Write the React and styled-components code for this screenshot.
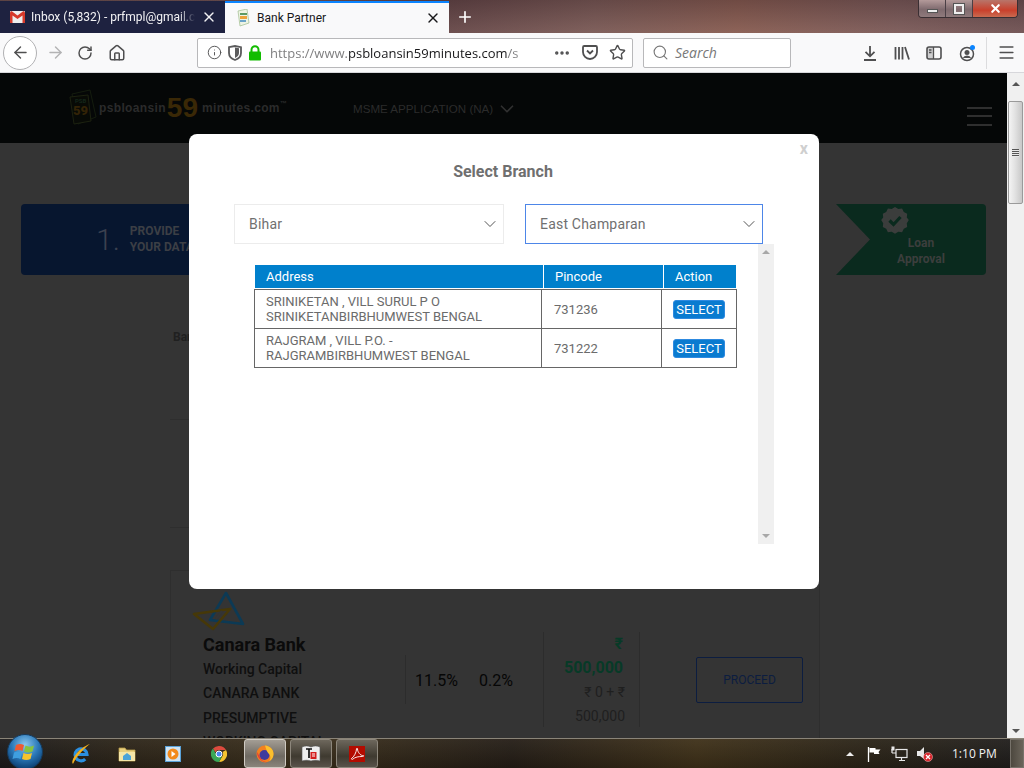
import React from 'react'
import styled, { createGlobalStyle } from 'styled-components'
import { ArrowLeft, ArrowRight, RotateCw, Home, Info, MoreHorizontal, Star, Search, X, Plus, Menu, ChevronDown } from 'lucide-react'

const GlobalStyle = createGlobalStyle`
  * { box-sizing: border-box; }
  html, body { margin: 0; padding: 0; background: #343434; }
`

const GmailIcon = () => (
  <svg width="15" height="12" viewBox="0 0 15 12">
    <rect width="15" height="12" rx="1" fill="#eee" />
    <path d="M0 1.5V12h2.5V4.5L7.5 8l5-3.5V12H15V1.5L13.5 0 7.5 4.5 1.5 0z" fill="#d6392b" />
  </svg>
)

const BankFavicon = () => (
  <svg width="16" height="18" viewBox="0 0 16 18">
    <path d="M3 2l9-2 2 14-9 3z" fill="#eef4e4" stroke="#9dbb8c" strokeWidth=".7" />
    <rect x="5" y="4" width="7" height="2" fill="#5d9a63" />
    <rect x="5" y="7" width="7" height="3" fill="#eda33b" />
    <rect x="5" y="11" width="6" height="2" fill="#6aa3c9" />
  </svg>
)

const ShieldIcon = () => (
  <svg width="14" height="16" viewBox="0 0 14 16">
    <path d="M1 2.2 7 1l6 1.2V8c0 3.4-2.6 5.8-6 7-3.4-1.200-6-3.600-6-7z" fill="none" stroke="#5b5b5c" strokeWidth="1.8" />
    <path d="M7 2.500 11 3.300V8c0 2.300-1.700 4-4 5z" fill="#5b5b5c" />
  </svg>
)

const LockIcon = () => (
  <svg width="14" height="16" viewBox="0 0 14 16">
    <path d="M3.500 7V4.800a3.500 3.500 0 0 1 7 0V7" fill="none" stroke="#12bc00" strokeWidth="2" />
    <rect x="1" y="6.500" width="12" height="9" rx="1" fill="#12bc00" />
  </svg>
)

const PocketIcon = () => (
  <svg width="16" height="15" viewBox="0 0 16 15">
    <path d="M1 2.200C1 1.500 1.500 1 2.200 1h11.600c.7 0 1.200.5 1.200 1.200V7a7 7 0 0 1-14 0z" fill="none" stroke="#4f4f50" strokeWidth="1.800" />
    <path d="M5 5.500 8 8.500l3-3" fill="none" stroke="#4f4f50" strokeWidth="1.800" />
  </svg>
)

const DownloadIcon = () => (
  <svg width="14" height="16" viewBox="0 0 14 16">
    <path d="M7 1v10M2.500 6.800 7 11.300l4.500-4.500M1 15h12" fill="none" stroke="#4f4f50" strokeWidth="1.800" />
  </svg>
)

const LibraryIcon = () => (
  <svg width="16" height="14" viewBox="0 0 16 14">
    <path d="M1.500 1v12.500M5 1v12.500M8.500 1v12.500M11 1l4 12.500" fill="none" stroke="#4f4f50" strokeWidth="1.800" />
  </svg>
)

const SidebarIcon = () => (
  <svg width="16" height="14" viewBox="0 0 16 14">
    <rect x="1" y="1" width="14" height="12" rx="2" fill="none" stroke="#4f4f50" strokeWidth="1.600" />
    <rect x="1" y="1" width="6.500" height="12" rx="1" fill="#4f4f50" opacity=".25" />
    <path d="M7.500 1v12M3 4h2.500M3 6.500h2.500" stroke="#4f4f50" strokeWidth="1.300" />
  </svg>
)

const AccountIcon = () => (
  <svg width="18" height="18" viewBox="0 0 18 18">
    <circle cx="8" cy="10" r="6.500" fill="none" stroke="#4f4f50" strokeWidth="1.500" />
    <circle cx="8" cy="8.500" r="2.500" fill="#4f4f50" />
    <path d="M3.800 14a4.500 4 0 0 1 8.400 0z" fill="#4f4f50" />
    <circle cx="13.500" cy="3.500" r="2.500" fill="#0a84ff" />
  </svg>
)

const MiniLogo = () => (
  <svg width="30" height="38" viewBox="0 0 30 38">
    <path d="M4 5 22 1l6 27-18 7z" fill="none" stroke="#141c0e" />
    <path d="M2 8l18-2 3 26-17 3z" fill="#080a06" stroke="#1c2110" />
    <text x="7" y="14" fontFamily="Roboto, sans-serif" fontSize="6" fontWeight="700" fill="#14261a">PSB</text>
    <text x="5" y="26" fontFamily="Roboto, sans-serif" fontSize="13" fontWeight="900" fill="#332306">59</text>
  </svg>
)

const BadgeCheck = () => (
  <svg width="28" height="28" viewBox="0 0 28 28">
    <path d="M14 1l3.300 2 3.800-.4 1.700 3.400 3.400 1.800-.4 3.800 2 2.400-2 3.300.4 3.800-3.400 1.700-1.700 3.400-3.800-.4-3.300 2-3.300-2-3.800.4-1.700-3.400-3.400-1.700.4-3.800-2-3.300 2-2.400-.4-3.800 3.400-1.800 1.700-3.400 3.800.4z" fill="#3b3d3c" />
    <path d="M8.500 14.500l4 4 7-7.500" fill="none" stroke="#0a2a1e" strokeWidth="3.200" />
  </svg>
)

const CanaraLogo = () => (
  <svg width="54" height="42" viewBox="0 0 54 42">
    <path d="M34 3 18 30l33 4z" fill="none" stroke="#0c3a55" strokeWidth="2.600" strokeLinejoin="round" />
    <path d="M2 24l36-5-17 20z" fill="none" stroke="#463808" strokeWidth="2.600" strokeLinejoin="round" />
    <path d="M30 21l-6 8" stroke="#343434" strokeWidth="2.400" />
  </svg>
)

const StartOrb = () => (
  <svg width="38" height="36" viewBox="0 0 38 36">
    <defs>
      <radialGradient id="orb" cx="50%" cy="30%" r="70%">
        <stop offset="0%" stopColor="#8cc8ee" />
        <stop offset="55%" stopColor="#2a78b8" />
        <stop offset="100%" stopColor="#0b3c6e" />
      </radialGradient>
    </defs>
    <circle cx="19" cy="18" r="17.500" fill="url(#orb)" stroke="#16395a" />
    <path d="M10 11c3-1.500 5-1.500 8 0l-1.500 6c-2.500-1.200-5-1.200-8 0z" fill="#ee5a33" />
    <path d="M19.500 11.500c3 1.500 5.500 1.500 8.500 0l-1.500 6c-3 1.200-5.500 1.200-8.500 0z" fill="#86c440" />
    <path d="M8 18.500c3-1.200 5.500-1.200 8 0L14.500 25c-2.500-1.200-5-1.200-8 0z" fill="#3f9fe0" />
    <path d="M17.500 19c3 1.200 5.500 1.200 8.500 0L24.500 25c-3 1.200-5.500 1.200-8.500 0z" fill="#f6c32c" />
  </svg>
)

const IeIcon = () => (
  <svg width="22" height="24" viewBox="0 0 22 24">
    <path d="M5.500 12.500h11.500a6 6 0 1 0-1.800 4.600" fill="none" stroke="#2b8fe0" strokeWidth="3.200" />
    <path d="M3 22C0 19 8 6 20 2c-3 2-14 12-17 20z" fill="#f2b01e" />
  </svg>
)

const ExplorerIcon = () => (
  <svg width="18" height="16" viewBox="0 0 18 16">
    <path d="M1 2h6l1.500 2H17v11H1z" fill="#e9cf7c" stroke="#b49a4a" strokeWidth=".8" />
    <path d="M1 6h16v9H1z" fill="#f5e6a8" />
    <path d="M5 14V10l4-3 4 3v4z" fill="#4ba3d8" />
  </svg>
)

const MediaIcon = () => (
  <svg width="16" height="16" viewBox="0 0 16 16">
    <rect x=".5" y=".5" width="15" height="15" fill="#cfe4f4" stroke="#5aa2d8" />
    <circle cx="8" cy="8" r="5.500" fill="#f28a1c" />
    <path d="M6.500 5l4 3-4 3z" fill="#fff" />
  </svg>
)

const ChromeIcon = () => (
  <svg width="16" height="16" viewBox="0 0 16 16">
    <path d="M8 0a8 8 0 0 1 7 4H8a4 4 0 0 0-3.600 2.200L2 2.600A8 8 0 0 1 8 0z" fill="#dd4b3e" />
    <path d="M15 4a8 8 0 0 1-7 12l3.500-6A4 4 0 0 0 11.500 6z" fill="#f5c431" />
    <path d="M2 2.600 5.500 9A4 4 0 0 0 11 10l-3 6A8 8 0 0 1 2 2.600z" fill="#3aa757" />
    <circle cx="8" cy="8" r="3" fill="#4a8af0" stroke="#fff" />
  </svg>
)

const FirefoxIcon = () => (
  <svg width="18" height="18" viewBox="0 0 18 18">
    <circle cx="9" cy="9" r="8.500" fill="#f2801f" />
    <circle cx="8.500" cy="10" r="5" fill="#3f3a9c" />
    <path d="M9 .5c5 .5 8.500 4 8.500 8.500 0 3-1.500 6-4.500 7.500 2-2.500 2-6-.5-8C11 7 10 4 9 .5z" fill="#fbc02d" />
    <path d="M1 7c0 6 5 11 11 10-4 0-7-2-8-5z" fill="#e33b3b" />
  </svg>
)

const DocIcon = () => (
  <svg width="20" height="18" viewBox="0 0 20 18">
    <path d="M1 2c3-1.500 6-1.500 9 0 3-1.500 6-1.500 9 0v14c-3-1-6-1-9 0-3-1-6-1-9 0z" fill="#eee" stroke="#555" strokeWidth=".6" />
    <path d="M5 4h6M8 4v9" stroke="#111" strokeWidth="1.700" />
    <rect x="9.500" y="7" width="6" height="7" fill="#d41f1f" />
    <path d="M11 9h3M11 11h3" stroke="#fff" />
  </svg>
)

const AcrobatIcon = () => (
  <svg width="16" height="16" viewBox="0 0 16 16">
    <rect width="16" height="16" fill="#b30b00" />
    <path d="M2.500 12.500C5 11 7.500 6 7.500 3c0-1 1-1 1 0 0 3 3 6.500 5 6.500s1.500 1-.5 1c-3 0-7 .5-9 2.500-.8.800-1.700.5-1.500-.5z" fill="none" stroke="#fff" strokeWidth=".9" />
  </svg>
)

const FlagIcon = () => (
  <svg width="16" height="16" viewBox="0 0 16 16">
    <path d="M1.500 1v15" stroke="#fff" strokeWidth="1.300" />
    <path d="M2.500 2h6v1.500h5l-2 2.500 1 2h-5.500V6.500H2.500z" fill="#fff" />
  </svg>
)

const NetworkIcon = () => (
  <svg width="17" height="16" viewBox="0 0 17 16">
    <rect x="5" y="3.500" width="11" height="8" fill="none" stroke="#e8e8e8" strokeWidth="1.200" />
    <path d="M8 14.500h6M10.500 12v2M1 7h4M1 3v4" stroke="#e8e8e8" strokeWidth="1.200" />
    <rect x=".5" y=".5" width="3" height="4" fill="#e8e8e8" />
  </svg>
)

const VolumeIcon = () => (
  <svg width="17" height="16" viewBox="0 0 17 16">
    <path d="M1 5h3l4-4v12l-4-3H1z" fill="#e8e8e8" />
    <circle cx="12" cy="11" r="4.500" fill="#d8232a" stroke="#f3c6c6" strokeWidth=".5" />
    <path d="M10 9l4 4M14 9l-4 4" stroke="#fff" strokeWidth="1.300" />
  </svg>
)

const App = () => {
  return (
    <Screen>
      <GlobalStyle />
      <TabStrip>
        <Tab>
          <GmailIcon />
          <TabTitle $fade>Inbox (5,832) - prfmpl@gmail.c</TabTitle>
          <CloseTab><X size={16} strokeWidth={2} /></CloseTab>
        </Tab>
        <Tab $active>
          <BankFavicon />
          <TabTitle>Bank Partner</TabTitle>
          <CloseTab><X size={16} strokeWidth={2} /></CloseTab>
        </Tab>
        <NewTab><Plus size={18} strokeWidth={2.200} /></NewTab>
        <WindowControls>
          <WinButton><MinGlyph /></WinButton>
          <WinButton><MaxGlyph /></WinButton>
          <WinButton $close><X size={13} strokeWidth={4} /></WinButton>
        </WindowControls>
      </TabStrip>

      <NavBar>
        <BackButton><ArrowLeft size={19} strokeWidth={1.800} /></BackButton>
        <NavIcon $muted $w={30}><ArrowRight size={19} strokeWidth={1.800} /></NavIcon>
        <NavIcon $w={30}><RotateCw size={16} strokeWidth={2.200} /></NavIcon>
        <NavIcon $w={34}><Home size={18} strokeWidth={2} /></NavIcon>
        <UrlBar>
          <UrlIcons>
            <Info size={15} strokeWidth={1.500} color="#4f4f50" />
            <ShieldIcon />
            <LockIcon />
          </UrlIcons>
          <UrlText>https://www.<b>psbloansin59minutes.com</b>/s</UrlText>
          <UrlActions>
            <MoreHorizontal size={18} strokeWidth={2.600} color="#4f4f50" />
            <PocketIcon />
            <Star size={17} strokeWidth={2} color="#4f4f50" />
          </UrlActions>
        </UrlBar>
        <SearchBox>
          <Search size={17} strokeWidth={1.600} color="#777" />
          <span>Search</span>
        </SearchBox>
        <ToolIcons>
          <DownloadIcon />
          <LibraryIcon />
          <SidebarIcon />
          <AccountIcon />
        </ToolIcons>
        <ToolDivider />
        <NavIcon $w={38}><Menu size={19} strokeWidth={2} /></NavIcon>
      </NavBar>

      <PageArea>
        <Page>
          <SiteHeader>
            <SiteLogo>
              <MiniLogo />
              <LogoWord>psbloansin</LogoWord>
              <LogoNumber>59</LogoNumber>
              <LogoWord>minutes.com<sup>™</sup></LogoWord>
            </SiteLogo>
            <AppMenu>MSME APPLICATION (NA) <ChevronDown size={22} strokeWidth={1.800} color="#303030" /></AppMenu>
            <Burger><i /><i /><i /></Burger>
          </SiteHeader>

          <Stepper>
            <StepBlue>
              <StepNumber>1.</StepNumber>
              <StepLabel>PROVIDE<br />YOUR DATA</StepLabel>
            </StepBlue>
            <StepGreen>
              <BadgeCheck />
              <StepCaption>Loan<br />Approval</StepCaption>
            </StepGreen>
          </Stepper>

          <Results>
            <BankLabel>Bank</BankLabel>
            <SectionLine $top={74} />
            <SectionLine $top={107} />
            <LoanCard>
              <BankInfo>
                <CanaraLogo />
                <BankName>Canara Bank</BankName>
                <LoanKind>Working Capital</LoanKind>
                <LoanKind>CANARA BANK</LoanKind>
                <LoanKind>PRESUMPTIVE</LoanKind>
                <LoanKind>WORKING CAPITAL</LoanKind>
              </BankInfo>
              <Metrics>
                <Rates>
                  <span>11.5%</span>
                  <span>0.2%</span>
                </Rates>
                <Amounts>
                  <AmountMain>₹<br />500,000</AmountMain>
                  <AmountSub>₹ 0 + ₹<br />500,000</AmountSub>
                </Amounts>
                <ProceedCell>
                  <ProceedButton>PROCEED</ProceedButton>
                </ProceedCell>
              </Metrics>
            </LoanCard>
          </Results>

          <Modal>
            <ModalClose>x</ModalClose>
            <ModalTitle>Select Branch</ModalTitle>
            <SelectRow>
              <SelectBox $w={270}>Bihar<ChevronDown size={20} strokeWidth={1.200} color="#555" /></SelectBox>
              <SelectBox $w={238} $focused>East Champaran<ChevronDown size={20} strokeWidth={1.200} color="#555" /></SelectBox>
            </SelectRow>
            <ListPanel>
              <ListInner>
                <HeadRow>
                  <span>Address</span>
                  <span>Pincode</span>
                  <span>Action</span>
                </HeadRow>
                <BodyTable>
                  <BodyRow>
                    <span>SRINIKETAN , VILL SURUL P O SRINIKETANBIRBHUMWEST BENGAL</span>
                    <span>731236</span>
                    <span><SelectButton>SELECT</SelectButton></span>
                  </BodyRow>
                  <BodyRow>
                    <span>RAJGRAM , VILL P.O. - RAJGRAMBIRBHUMWEST BENGAL</span>
                    <span>731222</span>
                    <span><SelectButton>SELECT</SelectButton></span>
                  </BodyRow>
                </BodyTable>
              </ListInner>
              <PanelScroll>
                <ArrowUp $color="#a8a8a8" />
                <ArrowDown $color="#a8a8a8" />
              </PanelScroll>
            </ListPanel>
          </Modal>
        </Page>
        <PageScroll>
          <ArrowUp $color="#555" />
          <ScrollThumb><Grip /></ScrollThumb>
          <ArrowDown $color="#555" />
        </PageScroll>
      </PageArea>

      <Taskbar>
        <OrbSlot><StartOrb /></OrbSlot>
        <TaskIcon $w={46}><IeIcon /></TaskIcon>
        <TaskIcon $w={46}><ExplorerIcon /></TaskIcon>
        <TaskIcon $w={46}><MediaIcon /></TaskIcon>
        <TaskIcon $w={46}><ChromeIcon /></TaskIcon>
        <TaskButton $active><FirefoxIcon /></TaskButton>
        <TaskButton><DocIcon /></TaskButton>
        <TaskButton><AcrobatIcon /></TaskButton>
        <Tray>
          <TrayArrow />
          <FlagIcon />
          <NetworkIcon />
          <VolumeIcon />
          <Clock>1:10 PM</Clock>
          <ShowDesktop />
        </Tray>
      </Taskbar>
    </Screen>
  )
}

const Screen = styled.div`
  width: 1024px;
  height: 768px;
  display: flex;
  flex-direction: column;
  overflow: hidden;
  font-family: Roboto, sans-serif;
`

const TabStrip = styled.div`
  height: 33px;
  flex: none;
  display: flex;
  align-items: flex-end;
  position: relative;
  background:
    linear-gradient(180deg, rgba(60, 40, 40, 0.35), rgba(150, 120, 110, 0.25)),
    linear-gradient(90deg, #6d5152 0%, #75575a 30%, #5e4145 42%, #7a5a58 58%, #8b5d52 72%, #7b5b5c 88%, #6c5054 100%);
`

const Tab = styled.div`
  width: ${p => (p.$active ? 224 : 225)}px;
  height: 32px;
  display: flex;
  align-items: center;
  padding: 0 8px 0 10px;
  gap: 6px;
  background: ${p => (p.$active ? '#f9f9fa' : '#1e2240')};
  border-top: ${p => (p.$active ? '2px solid #0a84ff' : 'none')};
  color: ${p => (p.$active ? '#18181a' : '#f2f2f4')};
`

const TabTitle = styled.div`
  flex: 1;
  min-width: 0;
  white-space: nowrap;
  font: 12px Roboto, sans-serif;
  ${p => p.$fade && `
    -webkit-mask-image: linear-gradient(90deg, #000 90%, transparent 100%);
    mask-image: linear-gradient(90deg, #000 90%, transparent 100%);
  `}
`

const CloseTab = styled.div`
  width: 16px;
  height: 16px;
  display: flex;
`

const NewTab = styled.div`
  width: 32px;
  height: 32px;
  display: flex;
  align-items: center;
  justify-content: center;
  color: #fff;
`

const WindowControls = styled.div`
  position: absolute;
  top: 0;
  right: 6px;
  width: 100px;
  height: 18px;
  display: flex;
  border: 1px solid #3a2f33;
  border-top: none;
  border-radius: 0 0 4px 4px;
  overflow: hidden;
`

const WinButton = styled.div`
  flex: ${p => (p.$close ? '0 0 44px' : '1')};
  display: flex;
  align-items: center;
  justify-content: center;
  color: #fff;
  border-right: ${p => (p.$close ? 'none' : '1px solid #4a3f45')};
  background: ${p => (p.$close
    ? 'linear-gradient(180deg, #b8756a, #c9402c 60%, #c96a50)'
    : 'linear-gradient(180deg, #b39a9a, #7f6a6e 55%, #8f7a7c)')};
`

const MinGlyph = styled.div`
  width: 11px;
  height: 4px;
  background: #eee;
  border: 1px solid #555;
  margin-top: 5px;
`

const MaxGlyph = styled.div`
  width: 10px;
  height: 10px;
  border: 2px solid #eee;
  outline: 1px solid #555;
`

const NavBar = styled.div`
  height: 40px;
  flex: none;
  display: flex;
  align-items: center;
  background: #f9f9fa;
  border-bottom: 1px solid #d7d7db;
  padding-left: 3px;
  color: #4f4f50;
`

const BackButton = styled.div`
  width: 34px;
  height: 34px;
  flex: none;
  border: 1px solid #b1b1b3;
  border-radius: 50%;
  background: #fff;
  display: flex;
  align-items: center;
  justify-content: center;
  margin-right: 3px;
`

const NavIcon = styled.div`
  width: ${p => p.$w}px;
  flex: none;
  display: flex;
  justify-content: center;
  color: ${p => (p.$muted ? '#b3b3b4' : '#4f4f50')};
`

const UrlBar = styled.div`
  width: 436px;
  height: 30px;
  flex: none;
  margin-left: 63px;
  display: flex;
  align-items: center;
  background: #fff;
  border: 1px solid #b8b8ba;
  border-radius: 2px;
  padding-left: 9px;
`

const UrlIcons = styled.div`
  display: flex;
  align-items: center;
  gap: 6px;
  flex: none;
  width: 63px;
`

const UrlText = styled.div`
  flex: 1;
  min-width: 0;
  white-space: nowrap;
  overflow: hidden;
  font: 13px "Open Sans", sans-serif;
  color: #7f7f80;
  -webkit-mask-image: linear-gradient(90deg, #000 88%, transparent 100%);
  mask-image: linear-gradient(90deg, #000 88%, transparent 100%);
  b {
    font-weight: 400;
    color: #18181a;
  }
`

const UrlActions = styled.div`
  display: flex;
  align-items: center;
  gap: 11px;
  flex: none;
  padding: 0 6px 0 7px;
`

const SearchBox = styled.div`
  width: 148px;
  height: 30px;
  flex: none;
  margin-left: 10px;
  display: flex;
  align-items: center;
  gap: 6px;
  padding-left: 8px;
  background: #fff;
  border: 1px solid #b8b8ba;
  border-radius: 2px;
  span {
    font: italic 14px "Open Sans", sans-serif;
    color: #777;
  }
`

const ToolIcons = styled.div`
  flex: none;
  width: 114px;
  margin-left: 72px;
  display: flex;
  align-items: center;
  justify-content: space-between;
`

const ToolDivider = styled.div`
  width: 1px;
  height: 32px;
  flex: none;
  margin-left: 9px;
  background: #dcdcde;
`

const PageArea = styled.div`
  flex: 1;
  min-height: 0;
  display: flex;
`

const Page = styled.div`
  flex: 1;
  min-width: 0;
  position: relative;
  overflow: hidden;
  background: #343434;
`

const SiteHeader = styled.div`
  height: 70px;
  display: flex;
  align-items: center;
  padding: 0 15px 0 68px;
  background: #050707;
`

const SiteLogo = styled.div`
  display: flex;
  align-items: center;
  width: 285px;
  color: #343434;
`

const LogoWord = styled.span`
  margin-left: 1px;
  font: 700 12px "Liberation Sans", sans-serif;
  letter-spacing: 0.35px;
  color: #2b2b2b;
  sup {
    font-size: 7px;
    vertical-align: 6px;
    line-height: 0;
  }
`

const LogoNumber = styled.span`
  font: 900 28px "Liberation Sans", sans-serif;
  color: #3a2806;
  margin: 0 3px 0 1px;
`

const AppMenu = styled.div`
  display: flex;
  align-items: center;
  gap: 3px;
  padding-top: 1px;
  font: 11.600px "Liberation Sans", sans-serif;
  color: #2b2b2b;
`

const Burger = styled.div`
  margin: 16px 0 0 auto;
  width: 25px;
  display: flex;
  flex-direction: column;
  gap: 6.500px;
  i {
    height: 2px;
    background: #2f2f2f;
  }
`

const Stepper = styled.div`
  height: 71px;
  margin: 61px 21px 0;
  display: flex;
  justify-content: space-between;
`

const StepBlue = styled.div`
  width: 500px;
  display: flex;
  align-items: center;
  padding-left: 75px;
  gap: 10px;
  background: #07162f;
  border-radius: 4px;
`

const StepNumber = styled.div`
  font-size: 30px;
  font-weight: 300;
  color: #3c4150;
`

const StepLabel = styled.div`
  margin-top: -2px;
  font-size: 12px;
  font-weight: 700;
  line-height: 16px;
  color: #3c3f45;
`

const StepGreen = styled.div`
  width: 150px;
  padding-left: 20px;
  margin-left: auto;
  display: flex;
  flex-direction: column;
  align-items: center;
  background: #0a2a1e;
  border-radius: 0 4px 4px 0;
  clip-path: polygon(0 0, 100% 0, 100% 100%, 0 100%, 34px 50%);
  svg {
    margin: 2px 52px 0 0;
  }
`

const StepCaption = styled.div`
  margin-top: 1px;
  font-size: 12px;
  font-weight: 700;
  line-height: 16px;
  text-align: center;
  color: #3c3e3d;
`

const Results = styled.div`
  position: relative;
  width: 650px;
  margin-left: 170px;
  padding-top: 54px;
`

const BankLabel = styled.div`
  padding-left: 3px;
  height: 16px;
  font-size: 12px;
  font-weight: 700;
  line-height: 16px;
  color: #202020;
`

const SectionLine = styled.div`
  height: 1px;
  margin-top: ${p => p.$top}px;
  background: #2e2e2e;
`

const LoanCard = styled.div`
  margin-top: 42px;
  height: 200px;
  display: flex;
  padding: 19px 0 0 22px;
  border: 1px solid #2e2e2e;
`

const BankInfo = styled.div`
  width: 212px;
  flex: none;
  padding-left: 10px;
  svg {
    display: block;
    margin-left: -11px;
  }
`

const BankName = styled.div`
  margin-top: 1px;
  font-size: 18px;
  font-weight: 700;
  line-height: 24px;
  color: #0b0b0b;
`

const LoanKind = styled.div`
  font-size: 14px;
  font-weight: 500;
  line-height: 24.300px;
  color: #0f0f0f;
`

const Metrics = styled.div`
  height: 95px;
  margin-top: 42px;
  display: flex;
  align-items: center;
`

const Rates = styled.div`
  width: 138px;
  height: 49px;
  display: flex;
  align-items: center;
  gap: 21px;
  padding: 2px 0 0 9px;
  border-left: 1px solid #2c2c2c;
  font-size: 16px;
  color: #060606;
`

const Amounts = styled.div`
  width: 97px;
  height: 95px;
  padding-right: 14px;
  text-align: right;
  border-left: 1px solid #2c2c2c;
  border-right: 1px solid #2c2c2c;
`

const AmountMain = styled.div`
  margin-right: 2px;
  font-size: 16px;
  font-weight: 700;
  line-height: 24px;
  color: #073a27;
`

const AmountSub = styled.div`
  font-size: 14px;
  line-height: 24px;
  color: #1f1f1f;
`

const ProceedCell = styled.div`
  padding-left: 56px;
`

const ProceedButton = styled.div`
  width: 107px;
  height: 46px;
  padding-top: 1px;
  display: flex;
  align-items: center;
  justify-content: center;
  font-size: 12px;
  color: #0c1d40;
  border: 1px solid #0c1d40;
  border-radius: 2px;
`

const Modal = styled.div`
  position: absolute;
  left: 189px;
  top: 61px;
  width: 630px;
  height: 455px;
  padding: 27px 45px 0;
  background: #fff;
  border-radius: 8px;
`

const ModalClose = styled.div`
  position: absolute;
  top: 5px;
  right: 11px;
  font-size: 16px;
  font-weight: 700;
  color: #cfcfcf;
`

const ModalTitle = styled.div`
  height: 22px;
  padding-right: 2px;
  text-align: center;
  font-size: 16px;
  font-weight: 700;
  line-height: 22px;
  color: #6f6f6f;
`

const SelectRow = styled.div`
  margin-top: 21px;
  display: flex;
  gap: 21px;
`

const SelectBox = styled.div`
  width: ${p => p.$w}px;
  height: 40px;
  display: flex;
  align-items: center;
  justify-content: space-between;
  padding: 0 3px 0 14px;
  font-size: 14px;
  letter-spacing: 0.2px;
  color: #707070;
  border: 1px solid ${p => (p.$focused ? '#4d86e8' : '#ececec')};
`

const ListPanel = styled.div`
  width: 540px;
  height: 300px;
  display: flex;
`

const ListInner = styled.div`
  flex: 1;
  padding: 21px 0 0 20px;
`

const HeadRow = styled.div`
  width: 481px;
  margin-left: 1px;
  height: 23px;
  display: grid;
  grid-template-columns: 288px 120px 73px;
  background: #0080cc;
  font-size: 13px;
  color: #fff;
  span {
    padding-left: 11px;
    line-height: 23px;
    border-left: 1px solid #fff;
  }
  span:first-child {
    border-left: none;
  }
`

const BodyTable = styled.div`
  width: 483px;
  margin-top: 1px;
  border: 1px solid #666;
`

const BodyRow = styled.div`
  height: 39px;
  display: grid;
  grid-template-columns: 286px 120px 75px;
  font-size: 13px;
  line-height: 15px;
  color: #6b6b6b;
  border-top: 1px solid #666;
  &:first-child {
    height: 38px;
    border-top: none;
  }
  span {
    display: flex;
    align-items: center;
    padding: 0 10px 0 11px;
    border-left: 1px solid #666;
  }
  span:first-child {
    border-left: none;
  }
  span:nth-child(2) {
    padding-left: 12px;
  }
`

const SelectButton = styled.button`
  width: 52px;
  height: 19px;
  flex: none;
  padding: 0;
  border: 1px solid #2e8ae0;
  border-radius: 3px;
  background: #0a7bd0;
  color: #fff;
  font: 13px Roboto, sans-serif;
`

const PanelScroll = styled.div`
  width: 16px;
  flex: none;
  display: flex;
  flex-direction: column;
  justify-content: space-between;
  align-items: center;
  padding: 6px 0;
  background: #f0f0f0;
`

const ArrowUp = styled.div`
  width: 0;
  height: 0;
  border: 4px solid transparent;
  border-top: none;
  border-bottom: 4px solid ${p => p.$color};
`

const ArrowDown = styled.div`
  width: 0;
  height: 0;
  border: 4px solid transparent;
  border-bottom: none;
  border-top: 4px solid ${p => p.$color};
`

const PageScroll = styled.div`
  width: 17px;
  flex: none;
  display: flex;
  flex-direction: column;
  align-items: center;
  padding: 9px 0 5px;
  background: #f0f0f0;
  ${ArrowDown} {
    margin-top: auto;
  }
`

const ScrollThumb = styled.div`
  width: 15px;
  height: 103px;
  margin-top: 15px;
  display: flex;
  align-items: center;
  justify-content: center;
  border: 1px solid #9a9a9a;
  border-radius: 2px;
  background: linear-gradient(90deg, #f4f4f4, #e2e2e2 45%, #c8c8c8);
`

const Grip = styled.div`
  width: 7px;
  height: 8px;
  background: repeating-linear-gradient(180deg, #555 0 1px, #e8e8e8 1px 2px);
`

const Taskbar = styled.div`
  height: 30px;
  flex: none;
  position: relative;
  display: flex;
  align-items: center;
  border-top: 1px solid #8a8478;
  background:
    linear-gradient(180deg, rgba(255, 255, 255, 0.05), rgba(0, 0, 0, 0.15)),
    linear-gradient(90deg, #1c1a1a 0%, #2c2418 12%, #3a2e1a 30%, #241d16 50%, #3e3018 68%, #2a2317 85%, #1f1d1c 100%);
`

const OrbSlot = styled.div`
  width: 50px;
  margin-right: 8px;
  flex: none;
  display: flex;
  justify-content: center;
  margin-top: -3px;
`

const TaskIcon = styled.div`
  width: ${p => p.$w}px;
  flex: none;
  display: flex;
  justify-content: center;
`

const TaskButton = styled.div`
  width: 42px;
  height: 29px;
  flex: none;
  margin: 0 2px;
  display: flex;
  align-items: center;
  justify-content: center;
  border: 1px solid ${p => (p.$active ? '#cfcac2' : '#8d877c')};
  border-radius: 3px;
  background: ${p => (p.$active
    ? 'linear-gradient(180deg, #a39d94, #6f6a62 60%, #8a857b)'
    : 'linear-gradient(180deg, #6d675c, #3f3a30 60%, #58524a)')};
`

const Tray = styled.div`
  margin-left: auto;
  height: 100%;
  display: flex;
  align-items: center;
  gap: 8px;
`

const TrayArrow = styled.div`
  width: 0;
  height: 0;
  margin-right: 5px;
  border: 4px solid transparent;
  border-top: none;
  border-bottom: 4px solid #eee;
`

const Clock = styled.div`
  width: 69px;
  padding-left: 11px;
  font: 12px "Open Sans", sans-serif;
  color: #f2f2f2;
  white-space: nowrap;
`

const ShowDesktop = styled.div`
  width: 14px;
  height: 100%;
  margin-left: -8px;
  border: 1px solid #77726a;
  background: linear-gradient(90deg, #4d483f, #6a645a);
`

export default App
